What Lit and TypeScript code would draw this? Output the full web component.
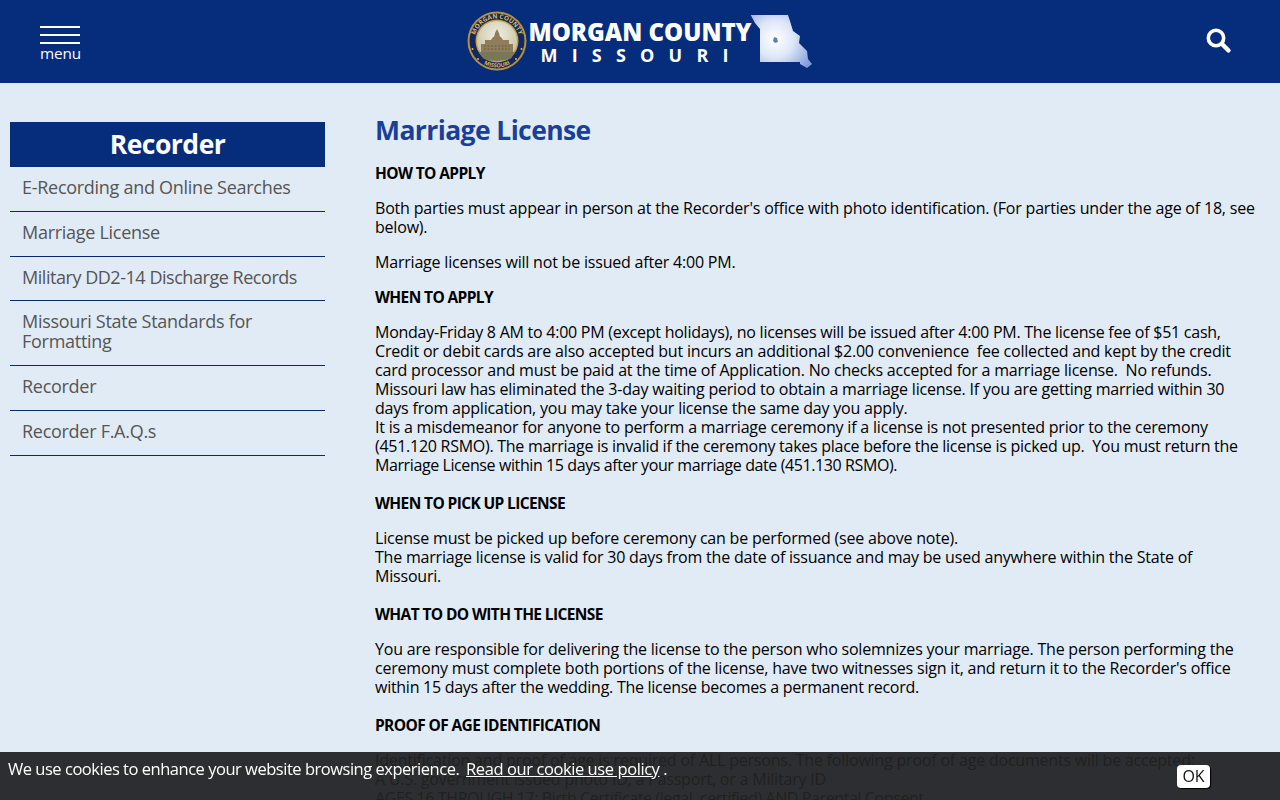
import { LitElement, html, css } from "lit";
import { customElement } from "lit/decorators.js";

const NAV = [
  { label: "E-Recording and Online Searches", tight: false },
  { label: "Marriage License", tight: false },
  { label: "Military DD2-14 Discharge Records", tight: true },
  { label: "Missouri State Standards for Formatting", tight: false },
  { label: "Recorder", tight: false },
  { label: "Recorder F.A.Q.s", tight: false },
];

@customElement("app-root")
export class AppRoot extends LitElement {
  static styles = css`
    :host { display: block; background: #e1ebf6; min-height: 800px; font-family: "Open Sans", "Noto Sans", sans-serif; color: #000; }
    * { box-sizing: border-box; }
    .hdr { height: 83px; background: #062c7c; display: grid; grid-template-columns: 426px 1fr auto; align-items: center; padding: 0 48px 0 40px; }
    .menu { width: 41px; display: flex; flex-direction: column; color: #fff; margin-top: 4px; }
    .menu i { display: block; height: 2px; background: #fff; width: 40px; margin-bottom: 6px; }
    .menu i:nth-child(3) { margin-bottom: 0; }
    .menu span { font-size: 15.3px; line-height: 17px; letter-spacing: -0.1px; margin-top: 1px; }
    .logo { display: block; }
    .logo .t { font-family: "Open Sans", sans-serif; fill: #fff; }
    .logo .s { font-family: "Open Sans", sans-serif; fill: #d9b860; font-size: 6.4px; font-weight: 700; }
    .search { display: block; margin-top: -1px; }
    .wrap { display: flex; align-items: flex-start; padding: 39px 24px 0 10px; }
    .side { width: 315px; flex: none; margin-right: 50px; }
    .side h2 { margin: 0; height: 45px; background: #062c7c; color: #fff; font-size: 26.5px; font-weight: 700; line-height: 45px; text-align: center; letter-spacing: -0.5px; }
    .side a { display: block; padding: 11px 12px 13px; font-size: 18px; line-height: 19.8px; color: #555; border-bottom: 1px solid #0a2a6e; letter-spacing: -0.28px; }
    .side a.tight { letter-spacing: -0.46px; }
    main { flex: 1; min-width: 0; white-space: nowrap; font-size: 16px; line-height: 19px; letter-spacing: -0.2px; }
    h1 { margin: -9px 0 0; font-size: 26.5px; line-height: 34px; font-weight: 700; color: #1a3f97; letter-spacing: -0.6px; }
    p { margin: 0 0 16px; }
    p.first { margin-top: 17px; }
    p.gap { margin-bottom: 19px; }
    b { font-weight: 700; font-size: 15.5px; letter-spacing: -0.62px; }
    .n1 { letter-spacing: -0.25px; }
    .n2 { letter-spacing: -0.27px; }
    .n3 { letter-spacing: -0.4px; }
    .cookie { position: fixed; left: 0; right: 0; bottom: 0; height: 48px; background: rgba(33, 34, 36, 0.94); color: #fff; display: flex; justify-content: space-between; align-items: flex-start; padding: 7px 70px 0 8px; font-size: 16.5px; line-height: 19px; letter-spacing: -0.48px; }
    .cookie a { color: #fff; text-decoration: underline; margin-left: 3px; letter-spacing: -0.42px; }
    .ok { width: 33px; height: 23px; margin-top: 6px; background: #fff; color: #111; border-radius: 4px; font-size: 16px; line-height: 23px; text-align: center; letter-spacing: -0.2px; box-shadow: 1px 1px 1px #000; }
  `;

  private logo() {
    return html`<svg class="logo" width="350" height="72" viewBox="0 0 350 72" aria-label="Morgan County Missouri">
      <defs>
        <radialGradient id="mo" gradientUnits="userSpaceOnUse" cx="309" cy="33" r="42"><stop offset="0" stop-color="#fff"/><stop offset="0.45" stop-color="#dde6f8"/><stop offset="1" stop-color="#7f9ddc"/></radialGradient>
        <radialGradient id="sk" cx="50%" cy="35%" r="60%"><stop offset="0" stop-color="#f0eee2"/><stop offset="1" stop-color="#c9c4a6"/></radialGradient>
        <path id="top" d="M8.5 35a22.5 22.5 0 0 1 45 0"/>
        <path id="bot" d="M4.5 35a26.5 26.5 0 0 0 53 0"/>
      </defs>
      <circle cx="31" cy="35" r="29.5" fill="#b8923a"/>
      <circle cx="31" cy="35" r="27.5" fill="#12285e"/>
      <circle cx="31" cy="35" r="21.5" fill="#c2a14f"/>
      <circle cx="31" cy="35" r="20" fill="url(#sk)"/>
      <path d="M15 46v-8h4v-4h6l2-3h1l1-4 2-4 2 4 1 4h1l2 3h6v4h4v8z" fill="#8f7d5c"/>
      <path d="M18 40h26M18 43h26" stroke="#62553d" stroke-width="0.8" stroke-dasharray="2 1.5"/>
      <path d="M13 46h36l-4 6.5q-14 5-28 0z" fill="#7a7658"/>
      <text class="s"><textPath href="#top" startOffset="50%" text-anchor="middle">MORGAN COUNTY</textPath></text>
      <text class="s" style="font-size:5.6px"><textPath href="#bot" startOffset="50%" text-anchor="middle">MISSOURI</textPath></text>
      <circle cx="6.5" cy="43" r="1" fill="#d9b860"/><circle cx="55.5" cy="43" r="1" fill="#d9b860"/><circle cx="12" cy="53" r="1" fill="#d9b860"/><circle cx="50" cy="53" r="1" fill="#d9b860"/>
      <text class="t" x="62.5" y="35" font-size="24" font-weight="800" letter-spacing="0">MORGAN COUNTY</text>
      <text class="t" x="74.5" y="56" font-size="18" font-weight="700" letter-spacing="14.2">MISSOURI</text>
      <path d="M284.7 9H322l2 6 3 10 7 5-1 7 8 8 1 8 4 5-5 4-7-4v-2H294V23l-5-6z" fill="url(#mo)"/>
      <path d="M308 31l3 1 1 4-3 1-2-2z" fill="#5f7fb5"/>
    </svg>`;
  }

  render() {
    return html`
      <div class="hdr">
        <div class="menu"><i></i><i></i><i></i><span>menu</span></div>
        ${this.logo()}
        <svg class="search" width="26" height="26" viewBox="0 0 26 26" fill="none" stroke="#fff"><circle cx="10" cy="10" r="7.7" stroke-width="3.6"/><path d="M15.8 15.8l6.7 6.7" stroke-width="4.4" stroke-linecap="round"/></svg>
      </div>
      <div class="wrap">
        <nav class="side">
          <h2>Recorder</h2>
          ${NAV.map((n) => html`<a class=${n.tight ? "tight" : ""}>${n.label}</a>`)}
        </nav>
        <main>
          <h1>Marriage License</h1>
          <p class="first"><b>HOW TO APPLY</b></p>
          <p>Both parties must appear in person at the Recorder's office with photo identification. (For parties under the age of 18, see<br>below).</p>
          <p>Marriage licenses will not be issued after 4:00 PM.</p>
          <p><b>WHEN TO APPLY</b></p>
          <p class="gap"><span class="n1">Monday-Friday 8 AM to 4:00 PM (except holidays), no licenses will be issued after 4:00 PM. The license fee of $51 cash,</span><br>Credit or debit cards are also accepted but incurs an additional $2.00 convenience&nbsp; fee collected and kept by the credit<br>card processor and must be paid at the time of Application. No checks accepted for a marriage license.&nbsp; No refunds.<br>Missouri law has eliminated the 3-day waiting period to obtain a marriage license. If you are getting married within 30<br>days from application, you may take your license the same day you apply.<br>It is a misdemeanor for anyone to perform a marriage ceremony if a license is not presented prior to the ceremony<br><span class="n2">(451.120 RSMO). The marriage is invalid if the ceremony takes place before the license is picked up.&nbsp; You must return the</span><br><span class="n3">Marriage License within 15 days after your marriage date (451.130 RSMO).</span></p>
          <p><b>WHEN TO PICK UP LICENSE</b></p>
          <p class="gap">License must be picked up before ceremony can be performed (see above note).<br>The marriage license is valid for 30 days from the date of issuance and may be used anywhere within the State of<br>Missouri.</p>
          <p><b>WHAT TO DO WITH THE LICENSE</b></p>
          <p class="gap">You are responsible for delivering the license to the person who solemnizes your marriage. The person performing the<br>ceremony must complete both portions of the license, have two witnesses sign it, and return it to the Recorder's office<br><span class="n2">within 15 days after the wedding. The license becomes a permanent record.</span></p>
          <p><b>PROOF OF AGE IDENTIFICATION</b></p>
          <p>Identification and proof of age is required of ALL persons. The following proof of age documents will be accepted:<br>A U.S. government issued photo ID, a Passport, or a Military ID<br><span class="n3">AGES 16 THROUGH 17: Birth Certificate (legal, certified) AND Parental Consent</span></p>
        </main>
      </div>
      <div class="cookie">
        <div>We use cookies to enhance your website browsing experience. <a>Read our cookie use policy</a> .</div>
        <div class="ok">OK</div>
      </div>
    `;
  }
}
